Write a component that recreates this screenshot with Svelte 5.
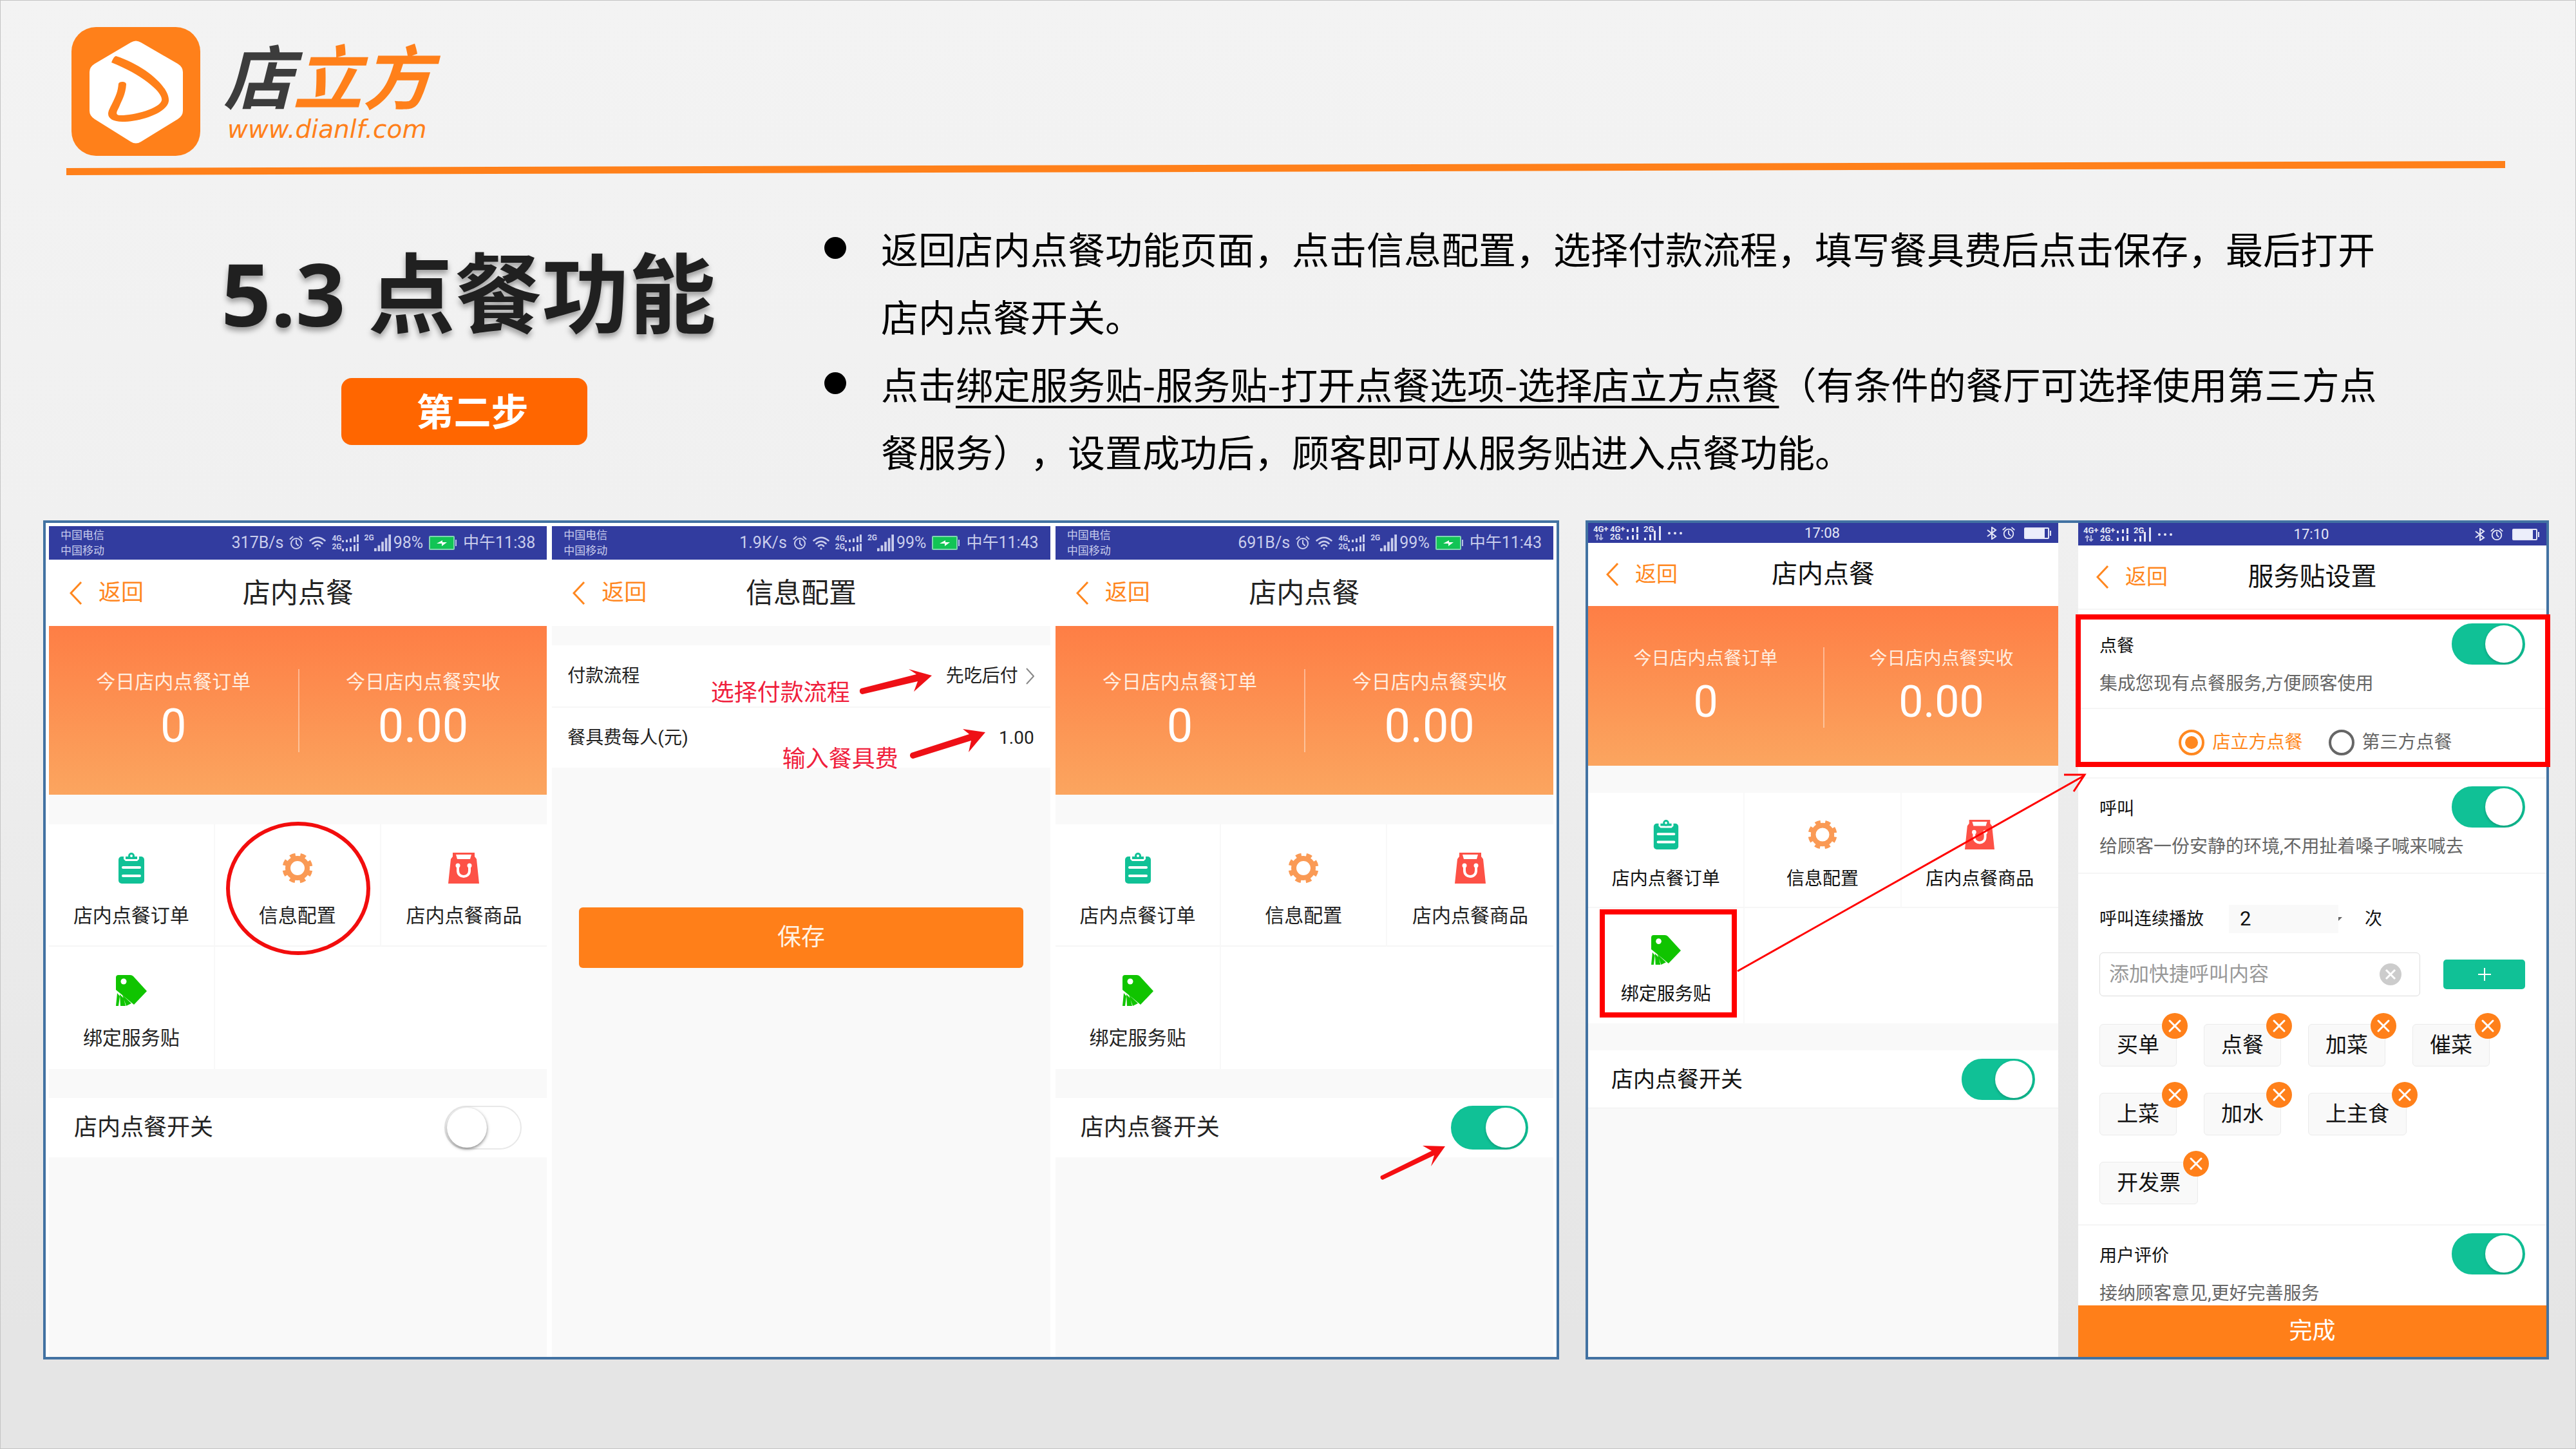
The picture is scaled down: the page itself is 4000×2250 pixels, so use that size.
<script>
  const carriers = ['中国电信', '中国移动'];

  const features = [
    { icon: 'orders', label: '店内点餐订单' },
    { icon: 'gear', label: '信息配置' },
    { icon: 'bag', label: '店内点餐商品' },
    { icon: 'tag', label: '绑定服务贴' }
  ];

  const quickCalls = ['买单', '点餐', '加菜', '催菜', '上菜', '加水', '上主食', '开发票'];
</script>

{#snippet alarm()}
  <svg class="ico-alarm" viewBox="0 0 22 22" fill="none" stroke="currentColor" stroke-width="2" stroke-linecap="round" aria-hidden="true">
    <circle cx="11" cy="12" r="8" />
    <path d="M11 7v5l3 3M1.500 5l4-3.500M20.500 5l-4-3.500" />
  </svg>
{/snippet}

{#snippet bars()}
  <svg class="ico-bars" viewBox="0 0 28 28" fill="currentColor" aria-hidden="true">
    <path d="M0 23h4v5H0zM6 18h4v10H6zM12 12h4v16h-4zM18 6h4v22h-4zM24 0h4v28h-4z" />
  </svg>
{/snippet}

{#snippet thinBars()}
  <svg class="ico-thin" viewBox="0 0 26 22" fill="currentColor" aria-hidden="true">
    <path d="M0 18h3v4H0zM8 13h3v9H8zM15 7h3v15h-3zM23 0h3v22h-3z" />
  </svg>
{/snippet}

{#snippet androidStatus(speed, level, time)}
  <div class="status">
    <div class="carriers">
      {#each carriers as name}<span>{name}</span>{/each}
    </div>
    <div class="indicators">
      <span>{speed}</span>
      {@render alarm()}
      <svg class="ico-wifi" viewBox="0 0 26 22" fill="none" stroke="currentColor" stroke-width="2.500" stroke-linecap="round" aria-hidden="true">
        <path d="M1.500 7.500c7-6.500 16-6.500 23 0M5.500 12c4.500-4.500 10.500-4.500 15 0M9 16c2.500-2.500 5.500-2.500 8 0" />
        <circle cx="13" cy="20" r="1.500" fill="currentColor" stroke="none" />
      </svg>
      <span class="sim">
        <span class="net"><b>4G</b><b>2G</b></span>
        <svg viewBox="0 0 26 26" fill="currentColor" aria-hidden="true">
          <path d="M0 9h3v3H0zM6 8h3v4H6zM12 6h3v6h-3zM18 3h3v9h-3zM23 0h3v12h-3zM0 22h3v4H0zM6 21h3v5H6zM12 19h3v7h-3zM18 16h3v10h-3zM23 14h3v12h-3z" />
        </svg>
      </span>
      <span class="cell"><b>2G</b>{@render bars()}</span>
      <span class="pct">{level}</span>
      <svg class="ico-charge" viewBox="0 0 44 22" aria-hidden="true">
        <rect x="1" y="1" width="38" height="20" rx="1" fill="#12c455" stroke="#7fd6b0" stroke-width="2" />
        <path d="M41 6h2v10h-2z" fill="#b9bfe6" />
        <path d="M12 12l9-5v3h7l-8 6v-4z" fill="#fff" />
      </svg>
      <span>{time}</span>
    </div>
  </div>
{/snippet}

{#snippet slimStatus(time)}
  <div class="status slim">
    <div class="radio-info">
      <span class="net"><b>4G+</b><svg class="ico-flow" viewBox="0 0 14 10" fill="none" stroke="currentColor" stroke-width="2" aria-hidden="true"><path d="M4 10V2M1 4l3-3 3 3M10 0v8M7 6l3 3 3-3" /></svg></span>
      <span class="net"><b>4G+</b><b>2G.</b></span>
      <svg class="ico-dual" viewBox="0 0 18 20" fill="currentColor" aria-hidden="true">
        <path d="M0 4h3v4H0zM8 2h3v6H8zM15 0h3v9h-3zM0 15h3v5H0zM8 13h3v7H8zM15 11h3v9h-3z" />
      </svg>
      <span class="net second"><b>2G</b></span>
      {@render thinBars()}
      <svg class="ico-dots" viewBox="0 0 24 6" fill="currentColor" aria-hidden="true">
        <circle cx="3" cy="3" r="2" /><circle cx="12" cy="3" r="2" /><circle cx="21" cy="3" r="2" />
      </svg>
    </div>
    <span class="clock">{time}</span>
    <div class="indicators">
      <svg class="ico-bt" viewBox="0 0 16 20" fill="none" stroke="currentColor" stroke-width="2" aria-hidden="true">
        <path d="M1 5l13 10-6 4V1l6 4L1 15" />
      </svg>
      {@render alarm()}
      <svg class="ico-batt" viewBox="0 0 42 18" fill="none" aria-hidden="true">
        <rect x="1" y="1" width="37" height="16" rx="1" stroke="#e4e6f6" stroke-width="2" />
        <path d="M2 2h30v14H2z" fill="#eceefb" />
        <path d="M40 5h2v8h-2z" fill="#e4e6f6" />
      </svg>
    </div>
  </div>
{/snippet}

{#snippet nav(title)}
  <header class="nav">
    <a class="back" href="#back">
      <svg viewBox="0 0 20 36" fill="none" stroke="currentColor" stroke-width="3" aria-hidden="true"><path d="M18 1L2 18l16 17" /></svg>
      <span>返回</span>
    </a>
    <h2>{title}</h2>
  </header>
{/snippet}

{#snippet featureIcon(name)}
  <svg class="feature-icon" viewBox="0 0 48 48" aria-hidden="true">
    {#if name === 'orders'}
      <rect x="4" y="6" width="40" height="42" rx="5" fill="#10c196" />
      <path d="M12 4h24v6l-3 3H15l-3-3z" fill="#fff" />
      <path d="M15 6h5a4.500 4.500 0 0 1 8 0h5v4H15z" fill="#10c196" />
      <circle cx="24" cy="5" r="5" fill="#10c196" />
      <circle cx="24" cy="5" r="2" fill="#fff" />
      <path d="M11 23h26M11 36h26" stroke="#fff" stroke-width="4" stroke-linecap="round" />
    {:else if name === 'gear'}
      <circle cx="24" cy="24" r="15" fill="none" stroke="#fa9a55" stroke-width="8" />
      <circle cx="24" cy="24" r="20.500" fill="none" stroke="#fa9a55" stroke-width="6" stroke-dasharray="8.500 7.600" transform="rotate(10.500 24 24)" />
    {:else if name === 'bag'}
      <path d="M7 0h34v6l3 4 4 38H0l4-38 3-4z" fill="#fd5146" />
      <path d="M12 3h24l-2 7 3 0H11l3 0z" fill="#fff" />
      <path d="M15 21v7c0 12 18 12 18 0v-7" fill="none" stroke="#fff" stroke-width="4" />
      <circle cx="15" cy="20" r="3.500" fill="#fff" /><circle cx="33" cy="20" r="3.500" fill="#fff" />
    {:else}
      <path d="M4 0h18q3 0 5 2l21 23-20 21L0 23V4q0-4 4-4z" fill="#10c400" />
      <circle cx="12" cy="10" r="4.500" fill="#fff" />
      <path d="M2 28l4 5-2 15H0zM6 30l6 6 3 12H7zM10 31l14 13-8 4z" fill="#10c400" />
    {/if}
  </svg>
{/snippet}

{#snippet toggle(id, label, checked)}
  <input class="toggle" type="checkbox" role="switch" {id} aria-label={label} {checked} />
{/snippet}

{#snippet home(id, on, ring, box)}
  {@render nav('店内点餐')}
  <section class="hero">
    <div class="stat"><span class="stat-label">今日店内点餐订单</span><strong>0</strong></div>
    <div class="stat"><span class="stat-label">今日店内点餐实收</span><strong>0.00</strong></div>
  </section>
  <section class="features">
    {#each features as f, i}
      <a class="feature" href="#{f.icon}">
        {@render featureIcon(f.icon)}
        <span>{f.label}</span>
        {#if ring && i === 1}<i class="ring"></i>{/if}
        {#if box && i === 3}<i class="mark"></i>{/if}
      </a>
    {/each}
  </section>
  <section class="switch-row">
    <label for={id}>店内点餐开关</label>
    {@render toggle(id, '店内点餐开关', on)}
  </section>
{/snippet}

<div class="page">
  <header class="brand">
    <svg class="logo" viewBox="0 0 200 200" aria-hidden="true">
      <rect width="200" height="200" rx="38" fill="#ff801a" />
      <path d="M92 24q8-5 16 0l57 33q8 5 8 13v60q0 8-8 13l-57 35q-8 5-16 0l-56-35q-8-5-8-13V70q0-8 8-13z" fill="#fff" />
      <path d="M69 45c44 14 84 48 82 70-2 18-44 32-72 32-14 0-22-5-22-12 0-5 3-10 6-16 6-12 9-19 10-31 1-4 12-4 12 1-1 16-7 25-11 35-3 6-7 12 0 13 20 1 63-10 66-23 3-12-30-40-78-59 2-5 4-9 7-10z" fill="#ff801a" />
    </svg>
    <div class="brand-text">
      <span class="brand-name">店<em>立方</em></span>
      <span class="brand-url">www.dianlf.com</span>
    </div>
  </header>
  <svg class="rule" viewBox="0 0 3788 22" preserveAspectRatio="none" aria-hidden="true">
    <path d="M0 11L3788 0V11L0 22z" fill="#ff801a" />
  </svg>

  <section class="intro">
    <div class="heading">
      <h1>5.3 点餐功能</h1>
      <span class="step">第二步</span>
    </div>
    <ul>
      <li>返回店内点餐功能页面，点击信息配置，选择付款流程，填写餐具费后点击保存，最后打开店内点餐开关。</li>
      <li>点击<u>绑定服务贴-服务贴-打开点餐选项-选择店立方点餐</u>（有条件的餐厅可选择使用第三方点餐服务），设置成功后，顾客即可从服务贴进入点餐功能。</li>
    </ul>
  </section>

  <main class="panels">
    <div class="panel trio">
      <article class="phone">
        {@render androidStatus('317B/s', '98%', '中午11:38')}
        {@render home('switch-a', false, true, false)}
      </article>

      <article class="phone">
        {@render androidStatus('1.9K/s', '99%', '中午11:43')}
        {@render nav('信息配置')}
        <form class="config">
          <div class="field">
            <label for="flow">付款流程</label>
            <select id="flow"><option>先吃后付</option></select>
            <svg class="more" viewBox="0 0 13 26" fill="none" stroke="#888" stroke-width="2" aria-hidden="true"><path d="M1 1l11 12L1 25" /></svg>
          </div>
          <div class="field">
            <label for="fee">餐具费每人(元)</label>
            <input id="fee" type="text" value="1.00" />
          </div>
          <div class="notes">
            <span class="note note-flow">选择付款流程</span>
            <span class="note note-fee">输入餐具费</span>
            <svg class="note-arrows" viewBox="0 0 773 191" aria-hidden="true">
              <path d="M479 67l86-22-12-8 36 10-28 25 6-16-86 20a5 5 0 0 1-2-9z" />
              <path d="M557 167l90-29-10-8 35 5-26 31 4-18-90 28a5 5 0 0 1-3-9z" />
            </svg>
          </div>
          <button class="save" type="button">保存</button>
        </form>
      </article>

      <article class="phone">
        {@render androidStatus('691B/s', '99%', '中午11:43')}
        {@render home('switch-b', true, false, false)}
        <svg class="tip-arrow" viewBox="0 0 104 56" aria-hidden="true">
          <path d="M4 48L83 9 69 1l35 1-22 31 5-17L7 54a4 4 0 0 1-3-6z" />
        </svg>
      </article>
    </div>

    <div class="panel duo">
      <article class="phone compact">
        {@render slimStatus('17:08')}
        {@render home('switch-c', true, false, true)}
      </article>

      <article class="phone compact settings">
        {@render slimStatus('17:10')}
        {@render nav('服务贴设置')}
        <section class="block first">
          <div class="line">
            <label for="order">点餐</label>
            {@render toggle('order', '点餐', true)}
          </div>
          <p>集成您现有点餐服务,方便顾客使用</p>
          <div class="choices">
            <label class="chosen"><input type="radio" name="vendor" checked />店立方点餐</label>
            <label><input type="radio" name="vendor" />第三方点餐</label>
          </div>
          <i class="mark"></i>
        </section>
        <section class="block">
          <div class="line">
            <label for="call">呼叫</label>
            {@render toggle('call', '呼叫', true)}
          </div>
          <p>给顾客一份安静的环境,不用扯着嗓子喊来喊去</p>
        </section>
        <section class="calls">
          <div class="repeat">
            <label for="times">呼叫连续播放</label>
            <select id="times"><option>2</option></select>
            <svg viewBox="0 0 6 6" aria-hidden="true"><path d="M0 0h6L0 6z" fill="#666" /></svg>
            <span>次</span>
          </div>
          <div class="adder">
            <div class="entry">
              <input type="text" placeholder="添加快捷呼叫内容" aria-label="添加快捷呼叫内容" />
              <button class="clear" type="button" aria-label="清除">
                <svg viewBox="0 0 34 34" stroke="#fff" stroke-width="3" aria-hidden="true"><path d="M10 10l14 14M24 10L10 24" /></svg>
              </button>
            </div>
            <button class="add" type="button" aria-label="添加">
              <svg viewBox="0 0 22 22" stroke="#fff" stroke-width="2" aria-hidden="true"><path d="M11 1v20M1 11h20" /></svg>
            </button>
          </div>
          <div class="chips">
            {#each quickCalls as name}
              <span class="chip">
                {name}
                <button type="button" aria-label="删除{name}">
                  <svg viewBox="0 0 40 40" stroke="#fff" stroke-width="3" stroke-linecap="round" aria-hidden="true"><path d="M12 12l16 16M28 12L12 28" /></svg>
                </button>
              </span>
            {/each}
          </div>
        </section>
        <section class="block last">
          <div class="line">
            <label for="review">用户评价</label>
            {@render toggle('review', '用户评价', true)}
          </div>
          <p>接纳顾客意见,更好完善服务</p>
        </section>
        <button class="done" type="button">完成</button>
      </article>

      <svg class="link-arrow" viewBox="0 0 1488 1295" preserveAspectRatio="none" fill="none" stroke="#f00" stroke-width="3" aria-hidden="true">
        <path d="M232 696L771 392M739 391h32l-17 26" />
      </svg>
    </div>
  </main>
</div>

<style>
  :global(body) {
    margin: 0;
  }

  .page,
  .page :global(*) {
    box-sizing: border-box;
  }

  .page {
    display: flex;
    flex-direction: column;
    min-height: 100vh;
    padding: 41px 0 138px;
    border: 1px solid #c4c4c4;
    background: linear-gradient(#f3f3f3, #f0f0f0 36%, #e5e5e5 92%);
    color: #000;
    font-family: 'Open Sans', 'Noto Sans CJK SC', sans-serif;
  }

  h1,
  h2,
  p,
  ul {
    margin: 0;
    padding: 0;
    font-weight: 400;
  }

  button,
  input,
  select {
    margin: 0;
    padding: 0;
    border: 0;
    border-radius: 0;
    background: none;
    color: inherit;
    font: inherit;
    appearance: none;
  }

  a {
    color: inherit;
    text-decoration: none;
  }

  svg {
    display: block;
    flex: none;
  }

  /* brand bar */
  .brand {
    display: flex;
    gap: 36px;
    height: 200px;
    padding-left: 110px;
  }

  .logo {
    width: 200px;
    height: 200px;
  }

  .brand-text {
    display: flex;
    flex-direction: column;
    padding-top: 12px;
    white-space: nowrap;
  }

  .brand-name {
    font: italic 700 108px/120px 'Noto Sans CJK SC', sans-serif;
    color: #3c3c3c;
  }

  .brand-name em,
  .brand-url {
    color: #ff801a;
  }

  .brand-url {
    padding-left: 6px;
    font: italic 400 39px/54px 'DejaVu Sans', sans-serif;
  }

  .rule {
    width: auto;
    height: 22px;
    margin: 8px 109px 0 102px;
  }

  /* introduction */
  .intro {
    display: grid;
    grid-template-columns: 1109px 1fr;
    padding: 61px 270px 55px 170px;
  }

  .heading {
    display: flex;
    flex-direction: column;
    align-items: center;
    padding: 32px 10px 0 0;
  }

  h1 {
    padding-left: 14px;
    color: #202020;
    font-size: 135px;
    font-weight: 700;
    line-height: 180px;
    text-shadow: 0 6px 8px rgba(0, 0, 0, 0.35);
    white-space: nowrap;
  }

  .step {
    width: 382px;
    margin-top: 42px;
    padding-left: 26px;
    border-radius: 16px;
    background: #f60;
    color: #fff;
    font-size: 58px;
    font-weight: 700;
    line-height: 104px;
    text-align: center;
  }

  ul {
    list-style: none;
    font-family: 'Noto Sans CJK SC', sans-serif;
    font-size: 58px;
    line-height: 105px;
    text-spacing-trim: space-all;
  }

  li {
    position: relative;
    padding-left: 88px;
  }

  li::before {
    content: '';
    position: absolute;
    top: 35px;
    left: 0;
    width: 34px;
    height: 34px;
    border-radius: 50%;
    background: #000;
  }

  u {
    text-decoration-thickness: 4px;
    text-underline-offset: 10px;
    text-decoration-skip-ink: none;
  }

  /* panels */
  .panels {
    flex: 1;
    display: grid;
    grid-template-columns: 2354fr 1496fr;
    gap: 41px;
    padding: 0 41px 0 66px;
    font-family: Roboto, 'Noto Sans CJK SC', sans-serif;
  }

  .panel {
    position: relative;
    display: grid;
    border: 4px solid #4272a2;
  }

  .trio {
    grid-template-columns: repeat(3, 1fr);
    gap: 8px;
    padding: 5px 5px 0;
    background: #fff;
  }

  .duo {
    grid-template-columns: 730fr 727fr;
    gap: 31px;
  }

  .phone {
    --nav: 103px;
    --pad: 39px;
    --title: 43px;
    --back: 35px;
    --text: 30px;
    --row: 36px;
    --value: 72px;
    position: relative;
    display: flex;
    flex-direction: column;
    min-width: 0;
    background: #f9f9f9;
    color: #222;
    white-space: nowrap;
  }

  .compact {
    --nav: 98px;
    --pad: 36px;
    --title: 40px;
    --back: 33px;
    --text: 28px;
    --row: 34px;
    --value: 68px;
    color: #111;
  }

  /* status bars */
  .status {
    display: flex;
    justify-content: space-between;
    align-items: center;
    height: 52px;
    padding: 0 18px;
    background: #323c9f;
    color: #c9cdec;
    font-size: 25px;
    line-height: 30px;
  }

  .carriers {
    display: flex;
    flex-direction: column;
    font-size: 17px;
    line-height: 24px;
  }

  .indicators,
  .sim,
  .cell,
  .radio-info {
    display: flex;
    align-items: center;
  }

  .indicators {
    gap: 9px;
  }

  .net {
    display: flex;
    flex-direction: column;
    font-size: 12px;
    line-height: 13px;
  }

  .sim svg {
    width: 26px;
    height: 26px;
  }

  .cell b {
    align-self: flex-start;
    font-size: 12px;
    line-height: 11px;
  }

  .pct {
    margin-left: -5px;
  }

  .ico-alarm {
    width: 22px;
    height: 22px;
  }

  .ico-wifi {
    width: 26px;
    height: 22px;
  }

  .ico-bars {
    width: 26px;
    height: 26px;
  }

  .ico-charge {
    width: 44px;
    height: 22px;
  }

  .slim {
    display: grid;
    grid-template-columns: 1fr auto 1fr;
    height: 31px;
    padding: 0 11px 0 8px;
    color: #e4e6f6;
    font-size: 22px;
  }

  .settings .slim {
    height: 35px;
  }

  .slim .indicators {
    justify-content: flex-end;
    gap: 8px;
  }

  .radio-info {
    gap: 3px;
    height: 24px;
  }

  .slim .net {
    width: 23px;
    height: 24px;
    font-size: 13px;
    line-height: 12px;
  }

  .slim .second {
    width: 15px;
    margin: 0 -17px 0 5px;
  }

  .ico-flow {
    width: 14px;
    height: 10px;
    margin: 1px 0 0 2px;
    opacity: 0.7;
  }

  .ico-dual {
    width: 18px;
    height: 20px;
  }

  .ico-thin {
    width: 26px;
    height: 22px;
  }

  .ico-dots {
    width: 24px;
    height: 6px;
    margin-left: 7px;
  }

  .ico-bt {
    width: 16px;
    height: 20px;
  }

  .slim .ico-alarm {
    width: 20px;
    height: 20px;
  }

  .ico-batt {
    width: 42px;
    height: 18px;
    margin-left: 6px;
  }

  /* title bars */
  .nav {
    display: grid;
    grid-template-columns: 1fr auto 1fr;
    align-items: center;
    height: var(--nav);
    padding: 0 32px;
    background: #fff;
  }

  .compact .nav {
    padding: 0 28px;
  }

  .back {
    display: flex;
    align-items: center;
    gap: 25px;
    color: #ff871f;
    font-size: var(--back);
    line-height: 50px;
  }

  .back svg {
    width: 20px;
    height: 36px;
  }

  h2 {
    font-size: var(--title);
    line-height: 60px;
  }

  /* home screen */
  .hero {
    display: grid;
    grid-template-columns: 1fr 1fr;
    height: 262px;
    padding: 67px 0 66px;
    background: linear-gradient(#fe7e45, #fba55f);
    color: #fff;
  }

  .stat {
    display: flex;
    flex-direction: column;
    align-items: center;
    gap: 9px;
  }

  .stat + .stat {
    border-left: 2px solid rgba(255, 255, 255, 0.4);
  }

  .stat-label {
    color: #ffeee0;
    font-size: var(--text);
    line-height: 40px;
  }

  .stat strong {
    font-size: var(--value);
    font-weight: 400;
    line-height: 80px;
  }

  .features {
    display: grid;
    grid-template-columns: repeat(3, 1fr);
    grid-auto-rows: 190px;
    margin-top: 46px;
    background: #fff;
  }

  .feature {
    position: relative;
    display: flex;
    flex-direction: column;
    align-items: center;
    gap: 30px;
    padding-top: 44px;
    border-bottom: 2px solid #f6f6f6;
    font-size: var(--text);
    line-height: 40px;
  }

  .feature:not(:nth-child(3)) {
    border-right: 2px solid #f8f8f8;
  }

  .feature:nth-child(4) {
    border-bottom: 0;
  }

  .feature-icon {
    width: 48px;
    height: 48px;
  }

  .ring {
    position: absolute;
    top: -4px;
    left: 50%;
    width: 224px;
    height: 207px;
    margin-left: -111px;
    border: 6px solid #f20d0d;
    border-radius: 50%;
  }

  .mark {
    position: absolute;
    z-index: 1;
    border: 8px solid #f00;
    pointer-events: none;
  }

  .feature .mark {
    inset: 2px 10px 9px 18px;
  }

  .switch-row {
    display: flex;
    justify-content: space-between;
    align-items: center;
    height: 92px;
    margin-top: 45px;
    padding: 0 var(--pad);
    background: #fff;
    font-size: var(--row);
    line-height: 50px;
  }

  .compact .hero {
    height: 248px;
    padding: 64px 0 66px;
  }

  .compact .stat {
    gap: 9px;
  }

  .compact .stat-label {
    line-height: 36px;
  }

  .compact .features {
    grid-auto-rows: 179px;
    margin-top: 42px;
  }

  .compact .feature {
    gap: 26px;
    padding-top: 42px;
  }

  .compact .feature-icon {
    width: 46px;
    height: 46px;
  }

  .compact .switch-row {
    height: 90px;
    margin-top: 42px;
    border-bottom: 1px solid #eee;
  }

  .toggle {
    display: flex;
    align-items: center;
    width: 120px;
    height: 68px;
    padding: 0 2px;
    border: 2px solid #e8e8e8;
    border-radius: 34px;
    background: #fff;
  }

  .toggle::before {
    content: '';
    width: 62px;
    height: 62px;
    border-radius: 50%;
    background: #fff;
    box-shadow: 0 2px 5px rgba(0, 0, 0, 0.5);
  }

  .toggle:checked {
    justify-content: flex-end;
    border-color: #10c196;
    background: #10c196;
  }

  .toggle:checked::before {
    box-shadow: 0 2px 4px rgba(0, 0, 0, 0.2);
  }

  .compact .toggle {
    width: 114px;
    height: 64px;
  }

  .compact .toggle::before {
    width: 58px;
    height: 58px;
  }

  .tip-arrow {
    position: absolute;
    top: 961px;
    right: 168px;
    width: 104px;
    height: 56px;
    fill: #f50f12;
  }

  /* configuration form */
  .config {
    position: relative;
    padding-top: 30px;
    font-size: 28px;
    line-height: 40px;
  }

  .field {
    display: flex;
    align-items: center;
    height: 95px;
    padding: 0 25px 0 24px;
    background: #fff;
  }

  .field + .field {
    border-top: 2px solid #f6f6f6;
  }

  .field select,
  .field input {
    width: 200px;
    margin-left: auto;
    text-align: right;
    text-align-last: right;
  }

  .more {
    width: 13px;
    height: 26px;
    margin-left: 12px;
  }

  .notes {
    position: absolute;
    inset: 30px 0 auto;
    height: 191px;
    color: #f0203c;
    font-size: 36px;
    line-height: 48px;
    pointer-events: none;
  }

  .note {
    position: absolute;
  }

  .note-flow {
    top: 50px;
    right: 311px;
  }

  .note-fee {
    top: 153px;
    right: 236px;
  }

  .note-arrows {
    position: absolute;
    top: 0;
    right: 0;
    width: 773px;
    height: 191px;
    fill: #ee1016;
  }

  .save {
    display: block;
    width: calc(100% - 84px);
    margin: 217px 42px 0;
    border-radius: 6px;
    background: #ff7f19;
    color: #fff2e4;
    font-size: 37px;
    line-height: 94px;
  }

  /* service settings */
  .settings {
    background: #fff;
  }

  .block {
    position: relative;
    padding: 12px 33px 20px;
    border-top: 2px solid #f5f5f5;
    font-size: 27px;
  }

  .block.first {
    padding: 21px 33px 0;
  }

  .line {
    display: flex;
    justify-content: space-between;
    align-items: center;
    height: 64px;
  }

  .block p {
    margin-top: 10px;
    color: #666;
    font-size: 28px;
    line-height: 40px;
  }

  .choices {
    display: flex;
    justify-content: center;
    gap: 40px;
    height: 108px;
    margin: 17px -33px 0;
    padding: 32px 0 0 10px;
    border-top: 2px solid #f5f5f5;
    color: #666;
    font-size: 28px;
    line-height: 40px;
  }

  .choices label {
    display: flex;
    gap: 12px;
    height: 40px;
  }

  .choices .chosen {
    color: #ff8820;
  }

  .choices input {
    display: grid;
    place-items: center;
    width: 40px;
    height: 40px;
    border: 4px solid currentColor;
    border-radius: 50%;
  }

  .choices input:checked::before {
    content: '';
    width: 20px;
    height: 20px;
    border-radius: 50%;
    background: currentColor;
  }

  .first .mark {
    inset: 7px -6px 16px -4px;
  }

  .calls {
    padding: 48px 33px 31px;
    border-top: 2px solid #f5f5f5;
  }

  .repeat {
    display: flex;
    align-items: center;
    font-size: 27px;
    line-height: 44px;
  }

  .repeat select {
    width: 170px;
    height: 44px;
    margin-left: 39px;
    padding-left: 17px;
    background: #f9f9f9;
    font-size: 31px;
  }

  .repeat svg {
    width: 6px;
    height: 6px;
  }

  .repeat span {
    margin-left: 35px;
  }

  .adder {
    display: flex;
    align-items: center;
    gap: 36px;
    margin-top: 30px;
  }

  .entry {
    flex: 1;
    display: flex;
    align-items: center;
    min-width: 0;
    height: 68px;
    padding: 0 28px 0 14px;
    border: 1px solid #ddd;
    border-radius: 6px;
  }

  .entry input {
    flex: 1;
    min-width: 0;
    font-size: 31px;
    line-height: 44px;
  }

  .entry input::placeholder {
    color: #999;
  }

  .clear {
    width: 34px;
    height: 34px;
    border-radius: 50%;
    background: #ccc;
  }

  .add {
    display: grid;
    place-items: center;
    width: 127px;
    height: 46px;
    border-radius: 5px;
    background: #10c196;
  }

  .add svg {
    width: 22px;
    height: 22px;
  }

  .chips {
    display: flex;
    flex-wrap: wrap;
    gap: 41px 42px;
    margin-top: 43px;
    font-size: 33px;
    line-height: 64px;
  }

  .chip {
    position: relative;
    padding: 0 26px;
    border: 1px solid #ebebeb;
    border-radius: 6px;
    background: #f9f9f9;
  }

  .chip button {
    position: absolute;
    top: -18px;
    right: -18px;
    width: 40px;
    height: 40px;
    border-radius: 50%;
    background: #ff801a;
  }

  .block.last {
    height: 122px;
    padding-bottom: 0;
  }

  .done {
    position: relative;
    flex: none;
    margin-top: auto;
    background: #ff7f19;
    color: #fff;
    font-size: 36px;
    line-height: 80px;
  }

  .link-arrow {
    position: absolute;
    inset: 0;
    z-index: 2;
    width: 100%;
    height: 100%;
    pointer-events: none;
  }
</style>
